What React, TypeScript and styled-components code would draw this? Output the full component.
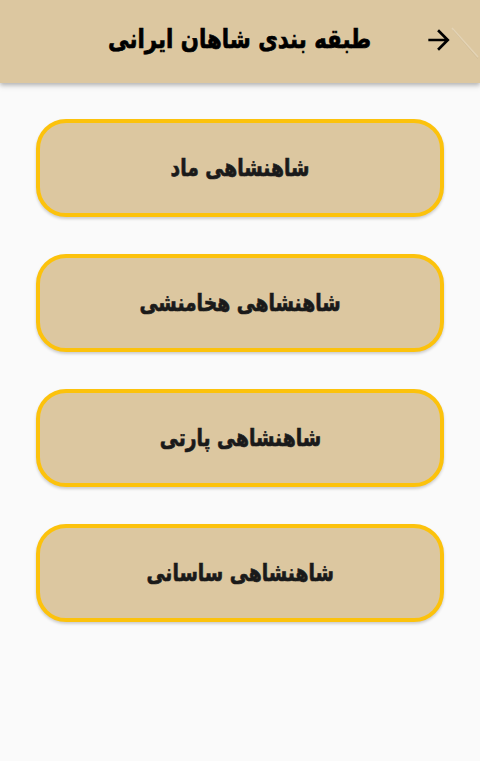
import React from "react";
import styled, { createGlobalStyle } from "styled-components";

const Global = createGlobalStyle`
  html, body { margin: 0; padding: 0; background: #fafafa; }
  body { font-family: "DejaVu Sans", "Noto Sans", sans-serif; }
`;

const Page = styled.div`
  direction: rtl;
  width: 480px;
  min-height: 761px;
  background: #fafafa;
  display: flex;
  flex-direction: column;
`;

const AppBar = styled.header`
  position: relative;
  height: 83px;
  background: #dcc7a0;
  box-shadow: 0 2px 4px rgba(0, 0, 0, 0.22), 0 4px 6px rgba(0, 0, 0, 0.08);
  display: flex;
  align-items: center;
  justify-content: center;
  overflow: hidden;
`;

const BackButton = styled.button`
  position: absolute;
  right: 24px;
  top: 23px;
  width: 34px;
  height: 34px;
  padding: 0;
  border: none;
  background: transparent;
  display: flex;
  align-items: center;
  justify-content: center;
`;

const Fold = styled.svg`
  position: absolute;
  right: 0;
  top: 0;
`;

const Title = styled.h1`
  margin: 0 0 5px 0;
  font-family: "DejaVu Sans", sans-serif;
  font-weight: 700;
  font-size: 26px;
  color: #000;
  -webkit-text-stroke: 0.7px #000;
  transform: scaleX(0.82);
`;

const List = styled.main`
  display: flex;
  flex-direction: column;
  gap: 37px;
  padding: 36px 36px 0 36px;
`;

const Card = styled.button`
  height: 98px;
  box-sizing: border-box;
  border: 4px solid #fcc20c;
  border-radius: 30px;
  background: #dcc7a0;
  box-shadow: 0 2px 3px rgba(0, 0, 0, 0.18);
  display: flex;
  align-items: center;
  justify-content: center;
  direction: rtl;
  padding: 0;
`;

const CardLabel = styled.span`
  font-family: "DejaVu Sans", sans-serif;
  font-weight: 700;
  font-size: 24px;
  color: #1a1a1a;
  -webkit-text-stroke: 0.7px #1a1a1a;
  transform: scaleX(0.78);
  display: inline-block;
`;

const items = ["شاهنشاهی ماد", "شاهنشاهی هخامنشی", "شاهنشاهی پارتی", "شاهنشاهی ساسانی"];

export default function App() {
  return (
    <>
      <Global />
      <Page>
        <AppBar>
          <Fold width="40" height="70" viewBox="0 0 40 70">
            <line x1="12" y1="28" x2="38" y2="57" stroke="rgba(255,255,255,0.22)" strokeWidth="1.5" />
            <line x1="13" y1="30" x2="38" y2="59" stroke="rgba(0,0,0,0.04)" strokeWidth="1" />
          </Fold>
          <BackButton aria-label="back">
            <svg width="32" height="32" viewBox="0 0 24 24">
              <path d="M12 4l-1.41 1.41L16.17 11H4v2h12.17l-5.58 5.59L12 20l8-8z" fill="#000" />
            </svg>
          </BackButton>
          <Title>طبقه بندی شاهان ایرانی</Title>
        </AppBar>
        <List>
          {items.map((t) => (
            <Card key={t}>
              <CardLabel>{t}</CardLabel>
            </Card>
          ))}
        </List>
      </Page>
    </>
  );
}
